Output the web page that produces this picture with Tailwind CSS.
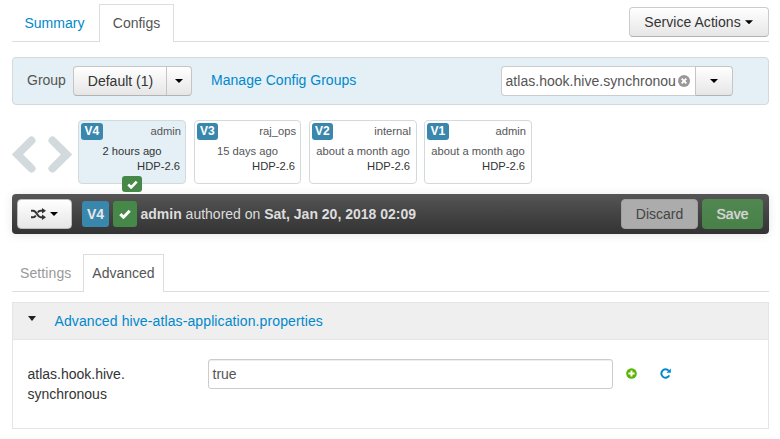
<!DOCTYPE html>
<html lang="en">
<head>
<meta charset="utf-8">
<title>Hive Configs</title>
<script src="https://cdn.jsdelivr.net/npm/@tailwindcss/browser@4"></script>
</head>
<body class="w-[780px] h-[439px] overflow-hidden bg-white font-['Liberation_Sans',Arial,sans-serif] text-[14px] leading-5 text-[#333]">
<svg class="hidden">
  <symbol id="check" viewBox="0 0 12 10"><path d="M1.3 5.1 4.5 8.2 10.7 1.8" fill="none" stroke="currentColor" stroke-width="3"/></symbol>
  <symbol id="caret" viewBox="0 0 8 4"><path d="M0 0h8L4 4z" fill="currentColor"/></symbol>
</svg>
<div class="ml-3 w-[757px]">
  <nav class="flex h-[42px] items-end border-b border-[#ddd]">
    <a class="flex h-[38px] w-[87px] items-center pl-[12.5px] pt-px text-[#0088cc]">Summary</a>
    <a class="-mb-px flex h-[38px] w-[75px] items-center justify-center border border-b-0 border-[#ddd] bg-white pb-px text-[#555]">Configs</a>
    <button class="mb-1 ml-auto flex h-[30px] w-[140px] items-center justify-center gap-1 rounded border border-[#ccc] border-b-[#b3b3b3] bg-linear-to-b from-white to-[#e6e6e6] pr-px tracking-[0.05px]">Service Actions<svg class="h-[4.5px] w-2 text-black"><use href="#caret"/></svg></button>
  </nav>

  <section class="mt-[15px] flex h-12 items-center rounded border border-[#d2dade] bg-[#e4f0f5] pl-[14px]">
    <span class="-mt-0.5 w-[46px] text-[#555]">Group</span>
    <div class="flex h-[30px] w-[119px] rounded border border-[#c5c5c5] border-b-[#b3b3b3] bg-linear-to-b from-white to-[#e6e6e6]">
      <span class="flex w-[93px] items-center justify-center border-r border-[#c5c5c5] pl-px">Default (1)</span>
      <span class="flex flex-1 items-center justify-center"><svg class="h-1 w-2 text-black"><use href="#caret"/></svg></span>
    </div>
    <a class="-mt-0.5 ml-[19px] w-[290px] tracking-[0.03px] text-[#0088cc]">Manage Config Groups</a>
    <div class="flex h-[30px] w-[194px] items-center rounded-l border border-r-0 border-[#ccc] bg-white pl-[3.5px] text-[#555]">
      <span class="w-[172.5px] overflow-hidden whitespace-nowrap tracking-[0.03px]">atlas.hook.hive.synchronou</span>
      <svg class="h-3 w-3" viewBox="0 0 12 12"><circle cx="6" cy="6" r="6" fill="#999"/><path d="m3.7 3.7 4.6 4.6m0-4.6L3.7 8.3" stroke="#fff" stroke-width="1.9"/></svg>
    </div>
    <span class="flex h-[30px] w-[38px] items-center justify-center rounded-r border border-[#c5c5c5] border-b-[#b3b3b3] bg-linear-to-b from-white to-[#e6e6e6]"><svg class="h-1 w-2 text-black"><use href="#caret"/></svg></span>
  </section>

  <section class="mt-[15px] flex h-16 text-[11.2px] leading-[15px] text-[#555]">
    <div class="flex w-[66px] items-center gap-3 pt-1">
      <svg class="h-[37px] w-6" viewBox="0 0 24 37"><path d="M19.5 4.5 5.5 18.5l14 14" fill="none" stroke="#d2dade" stroke-width="8" stroke-linecap="round"/></svg>
      <svg class="h-[37px] w-6" viewBox="0 0 24 37"><path d="m4.5 4.5 14 14-14 14" fill="none" stroke="#d2dade" stroke-width="8" stroke-linecap="round"/></svg>
    </div>
    <div class="flex">
      <div class="relative mr-2 w-[108px] rounded border border-[#d2dade] bg-[#e4f0f5] px-0.5 pt-0.5">
        <div class="flex h-[17px] items-center justify-between pr-0.5"><b class="h-[17px] rounded-[3px] bg-[#3a87ad] px-[3.5px] text-[12px] leading-[17px] text-white">V4</b><span>admin</span></div>
        <div class="mt-1 text-center text-[#333]">2 hours ago</div>
        <div class="pr-[3px] text-right text-[#333]">HDP-2.6</div>
        <span class="absolute left-[43px] top-[55px] flex h-4 w-5 items-center justify-center rounded-[3px] bg-[#468847] text-white"><svg class="h-[9px] w-[11px]"><use href="#check"/></svg></span>
      </div>
      <div class="mr-2 w-[107px] rounded border border-[#d2dade] px-0.5 pt-0.5">
        <div class="flex h-[17px] items-center justify-between pr-0.5"><b class="h-[17px] rounded-[3px] bg-[#3a87ad] px-[3px] text-[12px] leading-[17px] text-white">V3</b><span>raj_ops</span></div>
        <div class="mt-1 text-center">15 days ago</div>
        <div class="pr-[3px] text-right text-[#333]">HDP-2.6</div>
      </div>
      <div class="mr-[7px] w-[108px] rounded border border-[#d2dade] px-0.5 pt-0.5">
        <div class="flex h-[17px] items-center justify-between pr-[3px]"><b class="h-[17px] rounded-[3px] bg-[#3a87ad] px-[3px] text-[12px] leading-[17px] text-white">V2</b><span>internal</span></div>
        <div class="mt-1 text-center">about a month ago</div>
        <div class="pr-[4px] text-right text-[#333]">HDP-2.6</div>
      </div>
      <div class="w-[108px] rounded border border-[#d2dade] px-0.5 pt-0.5">
        <div class="flex h-[17px] items-center justify-between pr-[3px]"><b class="h-[17px] rounded-[3px] bg-[#3a87ad] px-[3.5px] text-[12px] leading-[17px] text-white">V1</b><span>admin</span></div>
        <div class="mt-1 text-center">about a month ago</div>
        <div class="pr-[4px] text-right text-[#333]">HDP-2.6</div>
      </div>
    </div>
  </section>

  <section class="mt-[10px] flex h-10 items-center rounded bg-linear-to-b from-[#555] to-[#333] pl-[5px] pr-1.5 text-[#ddd] shadow-[0_1px_10px_rgba(0,0,0,0.1)]">
    <button class="flex h-[30px] w-[55px] items-center justify-center gap-1 rounded border border-[#bbb] bg-linear-to-b from-white to-[#e6e6e6] text-[#333]">
      <svg class="h-3 w-[15px]" viewBox="0 0 15 12" fill="none" stroke="currentColor" stroke-width="2"><path d="M0 2.8h2.2C6 2.8 6 9.2 9.5 9.2H12M0 9.2h2.2c1.3 0 2-.8 2.6-1.8M6.8 4.5c.6-1 1.4-1.7 2.7-1.7H12"/><path d="M11 0v5.6L15 2.8zM11 6.4V12L15 9.2z" fill="currentColor" stroke="none"/></svg>
      <svg class="h-1 w-2 text-black"><use href="#caret"/></svg>
    </button>
    <b class="ml-[10px] flex h-[26px] w-[27px] items-center justify-center rounded-[3px] bg-[#3a87ad] text-[#e8e8e8]">V4</b>
    <span class="ml-1 flex h-[26px] w-6 items-center justify-center rounded-[3px] bg-[#468847] text-white"><svg class="h-[10px] w-3"><use href="#check"/></svg></span>
    <span class="ml-[3.5px] whitespace-nowrap"><b>admin</b> authored on <b>Sat, Jan 20, 2018 02:09</b></span>
    <button class="ml-auto h-[30px] w-[77px] rounded border border-[#a0a0a0] bg-[#acacac] text-[#444]">Discard</button>
    <button class="ml-1 h-[30px] w-[61px] rounded bg-linear-to-b from-[#528752] to-[#478147] text-[#d5d5d5] [text-shadow:0_0_1px_#d5d5d5]">Save</button>
  </section>

  <nav class="mt-5 flex h-[38px] border-b border-[#ddd]">
    <a class="flex w-[71px] items-center pl-[8px] tracking-[0.1px] text-[#999]">Settings</a>
    <a class="-mb-px flex w-[81px] items-center justify-center border border-b-0 border-[#ddd] bg-white pb-0.5 text-[#555]">Advanced</a>
  </nav>

  <section class="mt-[10px] h-[127px] border border-[#e5e5e5]">
    <header class="flex h-[37px] items-center border-b border-[#e5e5e5] bg-[#efefef] pl-[15px] tracking-[0.11px] text-[#0088cc]">
      <svg class="-mt-1.5 mr-[18.5px] h-[5px] w-2 text-[#222]" viewBox="0 0 8 4" preserveAspectRatio="none"><path d="M0 0h8L4 4z" fill="currentColor"/></svg>
      Advanced hive-atlas-application.properties
    </header>
    <div class="flex pt-[19px]">
      <label class="w-[195px] pl-[14.5px] pt-[5px]">atlas.hook.hive.<br>synchronous</label>
      <div class="flex h-[30px] w-[405px] items-center rounded-[3px] border border-[#ccc] pl-[3.5px] text-[#555] shadow-[inset_0_1px_1px_rgba(0,0,0,0.075)]">true</div>
      <svg class="ml-[13px] mt-[9px] h-[11px] w-[11px]" viewBox="0 0 11 11"><circle cx="5.5" cy="5.5" r="5.3" fill="#5ab400"/><path d="M5.5 2.4v6.2M2.4 5.5h6.2" stroke="#fff" stroke-width="1.9"/></svg>
      <svg class="ml-[22.5px] mt-[9px] h-[11px] w-[11px]" viewBox="0 0 11 11"><path d="M9.3 7.4A4.2 4.2 0 1 1 8.6 2.6" fill="none" stroke="#08c" stroke-width="2"/><path d="M10.8.4v4.4H6.4z" fill="#08c"/></svg>
    </div>
  </section>
</div>
</body>
</html>
